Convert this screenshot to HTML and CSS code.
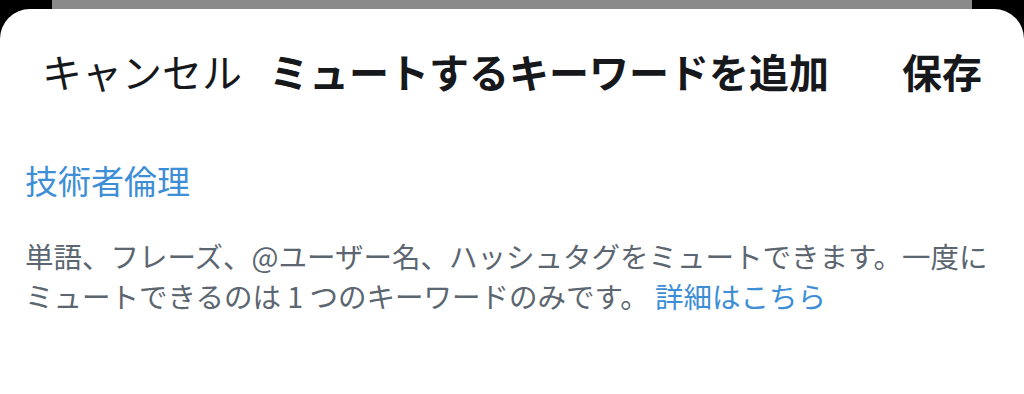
FILE: index.html
```html
<!DOCTYPE html>
<html lang="ja">
<head>
    <meta charset="UTF-8">
    <meta name="viewport" content="width=device-width, initial-scale=1.0">
    <title>ミュートするキーワードを追加</title>
    <link rel="stylesheet" href="styles.css">
</head>
<body>

<div class="backdrop-card"></div>

<div class="sheet">
    <!-- Header -->
    <div class="sheet-header">
        <span class="cancel">キャンセル</span>
        <span class="sheet-title">ミュートするキーワードを追加</span>
        <span class="save">保存</span>
    </div>

    <!-- Keyword -->
    <div class="sheet-body">
        <div class="keyword">技術者倫理</div>
        <p class="hint">単語、フレーズ、@ユーザー名、ハッシュタグをミュートできます。一度に<br>ミュートできるのは 1 つのキーワードのみです。 <a class="hint-link" href="#">詳細はこちら</a></p>
    </div>
</div>

</body>
</html>
```

FILE: styles.css
```css
html, body {
    height: 100%;
}

body {
    margin: 0;
    padding: 0;
    background: #000;
    font-family: "Noto Sans CJK JP", "Noto Sans", sans-serif;
    overflow: hidden;
}

.backdrop-card {
    height: 9px;
    margin: 0 52px;
    background: #8a8a8a;
}

.sheet {
    background: #fff;
    border-radius: 30px 30px 0 0;
    height: 385px;
}

.sheet-header {
    display: flex;
    align-items: center;
    height: 124px;
    padding: 0 42px;
    font-size: 40px;
    color: #16181b;
}

.cancel {
    font-weight: 400;
}

.sheet-title {
    margin-left: 27px;
    font-weight: 700;
}

.save {
    margin-left: auto;
    font-weight: 700;
}

.sheet-body {
    padding: 25px 10px 0 25px;
}

.keyword {
    font-size: 33px;
    line-height: 44px;
    color: #3d8ed6;
}

.hint {
    margin: 34px 0 0;
    font-size: 28.5px;
    line-height: 40px;
    color: #5c6670;
    white-space: nowrap;
}

.hint-link {
    color: #3d8ed6;
    text-decoration: none;
}
```
